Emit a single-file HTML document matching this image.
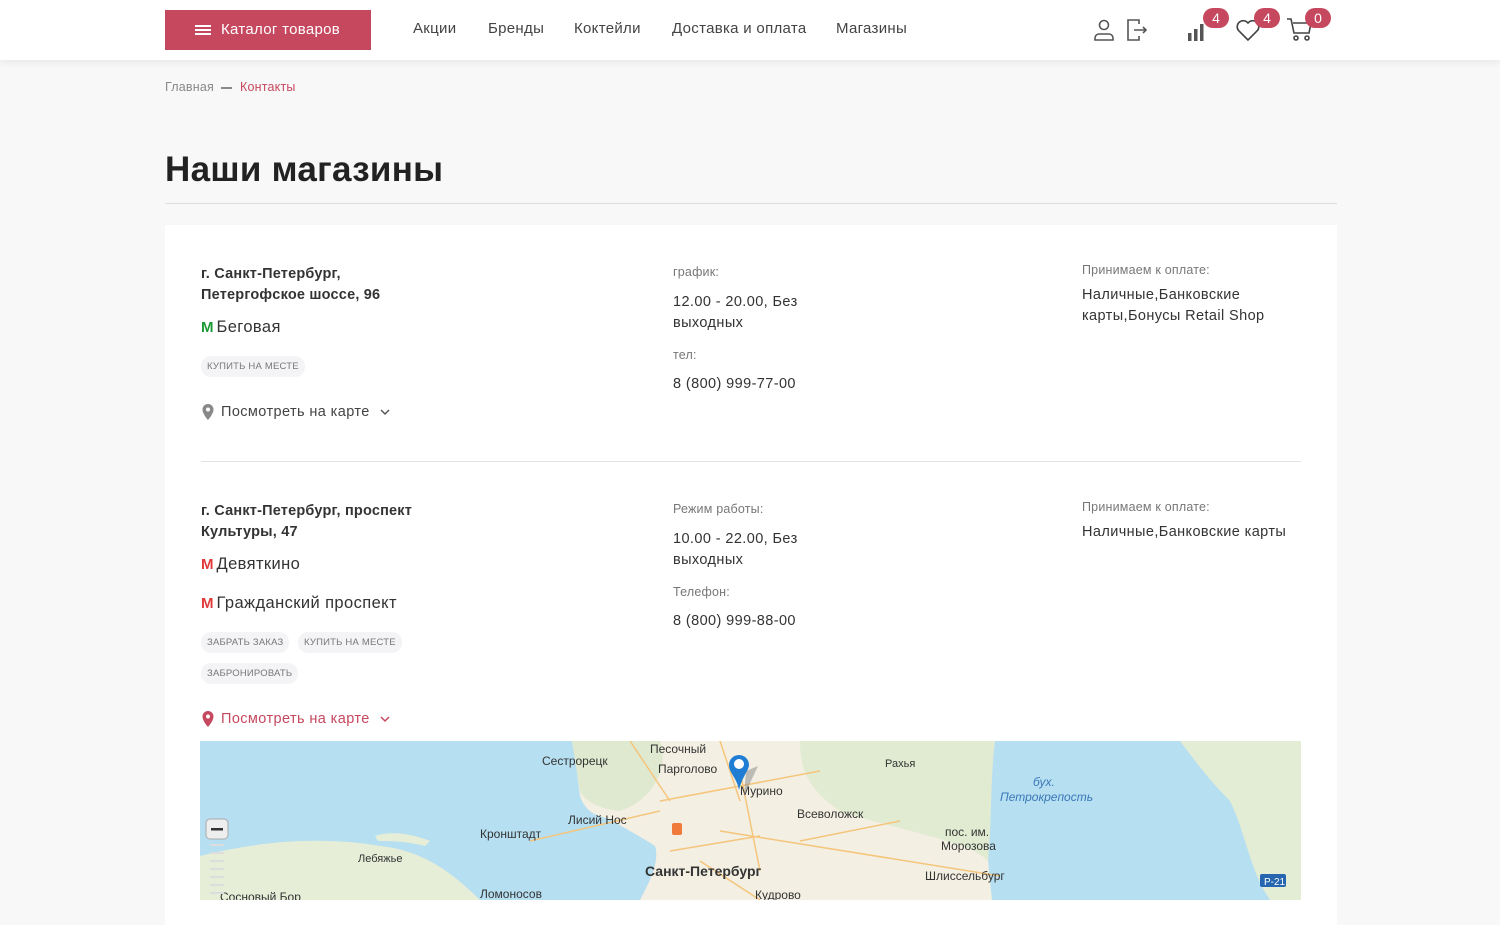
<!DOCTYPE html>
<html><head><meta charset="utf-8">
<style>
*{margin:0;padding:0;box-sizing:border-box}
body{width:1500px;height:900px;overflow:hidden;background:#f8f8f8;font-family:"Liberation Sans",sans-serif;color:#333;position:relative}
.abs{position:absolute}
header{position:absolute;left:0;top:0;width:1500px;height:60px;background:#fff;box-shadow:0 2px 8px rgba(0,0,0,.08)}
.cat{left:165px;top:10px;width:206px;height:40px;background:#c6485f;color:#fff;font-size:15px;line-height:40px;padding-left:56px;letter-spacing:.3px}
.cat i{position:absolute;left:30px;top:15px;width:16px;height:2px;background:#fff;box-shadow:0 4px 0 #fff,0 8px 0 #fff}
.nav{top:20px;font-size:15px;color:#444;letter-spacing:.3px}
.badge{width:26px;height:20px;border-radius:10px;background:#c6485f;color:#fff;font-size:14px;text-align:center;line-height:20px}
.bc{top:80px;font-size:12.5px;color:#888;letter-spacing:.2px}
h1{position:absolute;left:165px;top:150px;font-size:35px;font-weight:bold;color:#222;letter-spacing:.3px}
.hr{left:165px;top:203px;width:1172px;height:1px;background:#ddd}
.card{left:165px;top:225px;width:1172px;height:700px;background:#fff}
.addr{font-size:14.5px;font-weight:bold;color:#333;line-height:21px;letter-spacing:.2px}
.metro{font-size:16.5px;color:#333;letter-spacing:.4px}
.m{font-weight:bold;font-size:15px;letter-spacing:-1px;margin-right:4px}
.lbl{font-size:12.5px;color:#777;letter-spacing:.2px}
.val{font-size:14.5px;color:#333;line-height:21px;letter-spacing:.4px}
.tag{font-size:9.5px;color:#777;background:#f4f4f6;border-radius:10px;padding:5px 6px;letter-spacing:.2px}
.map{font-size:14.5px;letter-spacing:.4px}
</style></head><body>
<header>
<div class="abs cat"><i></i>Каталог товаров</div>
<div class="abs nav" style="left:413px">Акции</div>
<div class="abs nav" style="left:488px">Бренды</div>
<div class="abs nav" style="left:574px">Коктейли</div>
<div class="abs nav" style="left:672px">Доставка и оплата</div>
<div class="abs nav" style="left:836px">Магазины</div>
<svg class="abs" style="left:1092px;top:18px" width="24" height="24" viewBox="0 0 24 24" fill="none" stroke="#555" stroke-width="1.6"><circle cx="12" cy="7" r="4.5"/><path d="M3 22v-2a4 4 0 0 1 4-4h10a4 4 0 0 1 4 4v2z"/></svg>
<svg class="abs" style="left:1125px;top:18px" width="24" height="24" viewBox="0 0 24 24" fill="none" stroke="#555" stroke-width="1.6"><path d="M14 6V2H3v20h11v-4"/><path d="M9 12h12M18 9l3 3-3 3"/></svg>
<svg class="abs" style="left:1186px;top:20px" width="22" height="22" viewBox="0 0 22 22" fill="#555"><rect x="2" y="13" width="3.5" height="8"/><rect x="8" y="9" width="3.5" height="12"/><rect x="14" y="4" width="3.5" height="17"/></svg>
<div class="abs badge" style="left:1203px;top:8px">4</div>
<svg class="abs" style="left:1235px;top:18px" width="26" height="24" viewBox="0 0 26 24" fill="none" stroke="#444" stroke-width="1.6"><path d="M13 22 3.5 12.5A5.5 5.5 0 0 1 13 5a5.5 5.5 0 0 1 9.5 7.5z"/></svg>
<div class="abs badge" style="left:1254px;top:8px">4</div>
<svg class="abs" style="left:1286px;top:17px" width="28" height="26" viewBox="0 0 28 26" fill="none" stroke="#444" stroke-width="1.6"><path d="M1 2h4l3 14h15l2-10H7"/><circle cx="10" cy="21" r="2"/><circle cx="21" cy="21" r="2"/></svg>
<div class="abs badge" style="left:1305px;top:8px">0</div>
</header>
<div class="abs bc" style="left:165px">Главная</div>
<div class="abs" style="left:221px;top:87px;width:11px;height:1.5px;background:#888"></div>
<div class="abs bc" style="left:240px;color:#c6485f">Контакты</div>
<h1>Наши магазины</h1>
<div class="abs hr"></div>
<div class="abs card"></div>

<div class="abs addr" style="left:201px;top:264px">г. Санкт-Петербург,<br>Петергофское шоссе, 96</div>
<div class="abs metro" style="left:201px;top:318px"><span class="m" style="color:#1a9a35">M</span>Беговая</div>
<div class="abs tag" style="left:201px;top:356px">КУПИТЬ НА МЕСТЕ</div>
<svg class="abs" style="left:202px;top:404px" width="12" height="16" viewBox="0 0 12 16"><path d="M6 0a5.5 5.5 0 0 0-5.5 5.5C.5 10 6 16 6 16s5.5-6 5.5-10.5A5.5 5.5 0 0 0 6 0z" fill="#888"/><circle cx="6" cy="5.5" r="2" fill="#fff"/></svg>
<div class="abs map" style="left:221px;top:404px;color:#444">Посмотреть на карте</div>
<svg class="abs" style="left:380px;top:408px" width="10" height="8"><path d="M1 2l4 4 4-4" stroke="#555" stroke-width="1.5" fill="none"/></svg>
<div class="abs lbl" style="left:673px;top:265px">график:</div>
<div class="abs val" style="left:673px;top:292px">12.00 - 20.00, Без<br>выходных</div>
<div class="abs lbl" style="left:673px;top:348px">тел:</div>
<div class="abs val" style="left:673px;top:374px">8 (800) 999-77-00</div>
<div class="abs lbl" style="left:1082px;top:263px">Принимаем к оплате:</div>
<div class="abs val" style="left:1082px;top:285px">Наличные,Банковские<br>карты,Бонусы Retail Shop</div>
<div class="abs" style="left:201px;top:461px;width:1100px;height:1px;background:#e3e3e3"></div>

<div class="abs addr" style="left:201px;top:501px">г. Санкт-Петербург, проспект<br>Культуры, 47</div>
<div class="abs metro" style="left:201px;top:555px"><span class="m" style="color:#e03a3a">M</span>Девяткино</div>
<div class="abs metro" style="left:201px;top:594px"><span class="m" style="color:#e03a3a">M</span>Гражданский проспект</div>
<div class="abs tag" style="left:201px;top:632px">ЗАБРАТЬ ЗАКАЗ</div>
<div class="abs tag" style="left:298px;top:632px">КУПИТЬ НА МЕСТЕ</div>
<div class="abs tag" style="left:201px;top:663px">ЗАБРОНИРОВАТЬ</div>
<svg class="abs" style="left:202px;top:711px" width="12" height="16" viewBox="0 0 12 16"><path d="M6 0a5.5 5.5 0 0 0-5.5 5.5C.5 10 6 16 6 16s5.5-6 5.5-10.5A5.5 5.5 0 0 0 6 0z" fill="#c6485f"/><circle cx="6" cy="5.5" r="2" fill="#fff"/></svg>
<div class="abs map" style="left:221px;top:711px;color:#c6485f">Посмотреть на карте</div>
<svg class="abs" style="left:380px;top:715px" width="10" height="8"><path d="M1 2l4 4 4-4" stroke="#c6485f" stroke-width="1.5" fill="none"/></svg>
<div class="abs lbl" style="left:673px;top:502px">Режим работы:</div>
<div class="abs val" style="left:673px;top:529px">10.00 - 22.00, Без<br>выходных</div>
<div class="abs lbl" style="left:673px;top:585px">Телефон:</div>
<div class="abs val" style="left:673px;top:611px">8 (800) 999-88-00</div>
<div class="abs lbl" style="left:1082px;top:500px">Принимаем к оплате:</div>
<div class="abs val" style="left:1082px;top:522px">Наличные,Банковские карты</div>

<svg class="abs" style="left:200px;top:741px" width="1101" height="159" viewBox="0 0 1101 159" font-family="Liberation Sans,sans-serif" font-size="12" fill="#333">
<rect width="1101" height="159" fill="#b6dff1"/>
<path d="M372 0H795C790 20 792 50 788 80C786 110 790 140 792 159H440C450 140 460 120 455 105C440 95 420 85 410 78C395 75 385 70 380 55C378 40 376 20 372 0z" fill="#f3efe2"/>
<path d="M372 0H460C470 30 450 60 420 70C400 68 384 60 380 50z" fill="#dfe9cf"/>
<path d="M600 0H795C790 40 792 80 788 120C770 100 700 90 640 70C610 50 600 30 600 0z" fill="#e1ebd2"/>
<path d="M980 0H1101V159H1070C1050 130 1045 90 1030 60C1010 40 995 20 980 0z" fill="#e3ecd4"/>
<path d="M0 115C60 100 120 95 180 105C230 110 260 140 280 159H0z" fill="#e7eed8"/>
<path d="M175 95C190 90 210 92 230 100L225 105C205 100 190 100 178 100z" fill="#e7eed8"/>
<path d="M460 60L620 30M470 110L560 95M520 90L800 135M540 30L560 130M330 100L460 70M430 0L470 60M520 0L540 60M600 100L700 80M500 120L560 159" stroke="#f5c57c" stroke-width="1.5" fill="none"/>
<rect x="472" y="82" width="10" height="12" rx="2" fill="#f07a3a"/>
<text x="342" y="24">Сестрорецк</text><text x="450" y="12">Песочный</text>
<text x="458" y="32">Парголово</text><text x="540" y="54">Мурино</text>
<text x="685" y="26" font-size="11">Рахья</text><text x="597" y="77">Всеволожск</text>
<text x="368" y="83">Лисий Нос</text><text x="280" y="97">Кронштадт</text>
<text x="158" y="121" font-size="11">Лебяжье</text><text x="745" y="95">пос. им.</text><text x="741" y="109">Морозова</text>
<text x="725" y="139">Шлиссельбург</text><text x="445" y="135" font-weight="bold" font-size="14">Санкт-Петербург</text>
<text x="280" y="157">Ломоносов</text><text x="20" y="160">Сосновый Бор</text><text x="555" y="158">Кудрово</text>
<text x="833" y="45" fill="#3a78b8" font-style="italic">бух.</text><text x="800" y="60" fill="#3a78b8" font-style="italic">Петрокрепость</text>
<rect x="1060" y="133" width="26" height="13" rx="2" fill="#2666b0"/><text x="1064" y="144" fill="#fff" font-size="10">P-21</text>
<path d="M546 30l12 -5 -14 30z" fill="#888" opacity=".5"/>
<path d="M529 32a10 10 0 1 1 20 0c0 5-6 10-10 25c-2-12-10-17-10-25z" fill="#1f7ed4" transform="translate(0,-8)"/><circle cx="539" cy="23" r="5" fill="#fff"/>
<rect x="6" y="78" width="22" height="20" rx="4" fill="#eee" stroke="#aaa"/><rect x="11" y="87" width="12" height="2.5" fill="#333"/>
<path d="M10 104h14M10 112h14M10 120h14M10 128h14M10 136h14M10 144h14M10 152h14" stroke="#ddd" stroke-width="2"/>
</svg>
</body></html>
